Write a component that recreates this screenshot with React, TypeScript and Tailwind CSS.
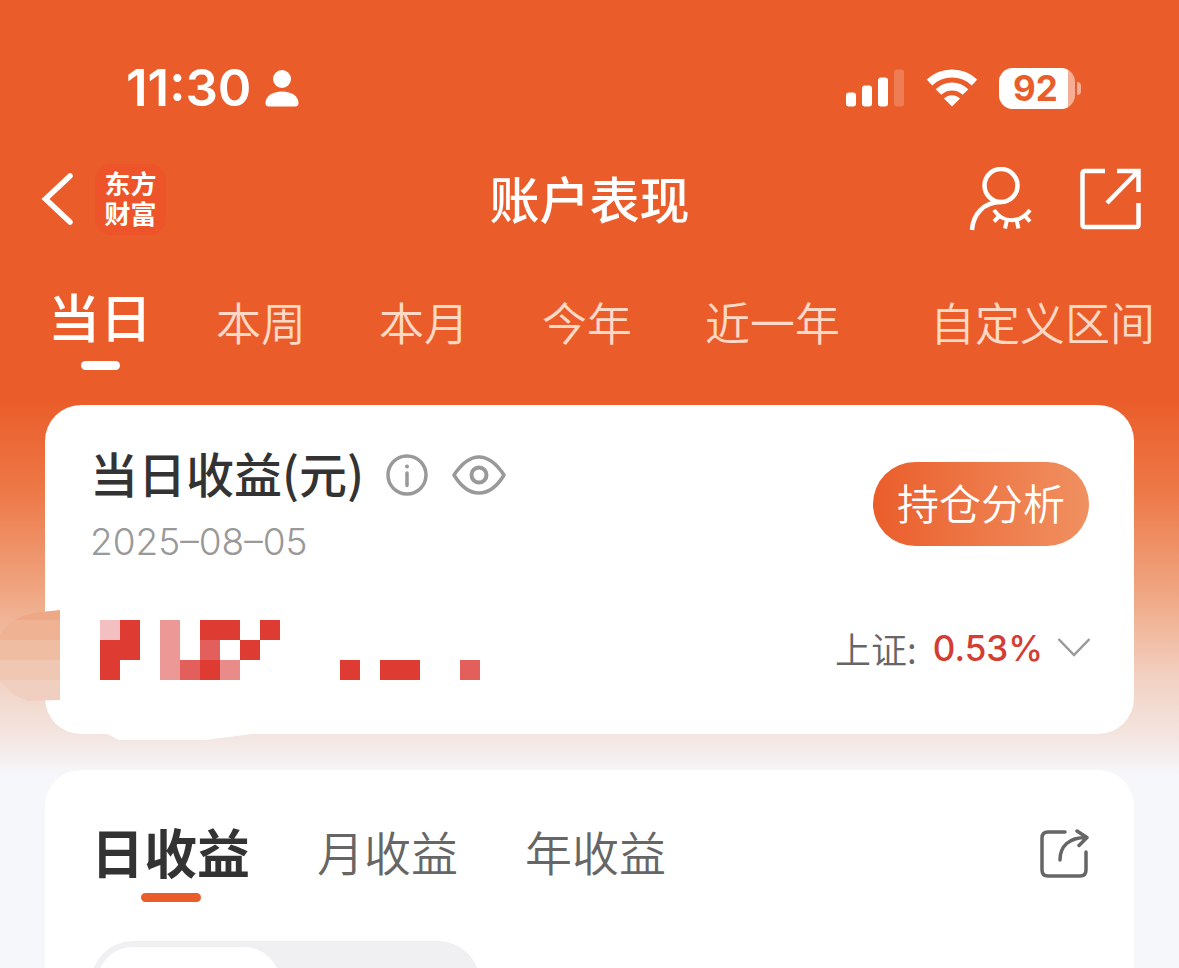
import { clsx } from "clsx"

const RANGES = ["本周", "本月", "今年", "近一年"]

// censored amount, 20px cells: [column, row, width, height, colour]
const MOSAIC: [number, number, number, number, string][] = [
  [0, 0, 1, 1, "#f3bfc1"],
  [1, 0, 1, 2, "#de3c33"],
  [0, 1, 1, 2, "#de3c33"],
  [3, 0, 1, 3, "#eb9897"],
  [5, 0, 2, 1, "#de3c33"],
  [8, 0, 1, 1, "#de3c33"],
  [5, 1, 1, 1, "#e35f5c"],
  [7, 1, 1, 1, "#de3c33"],
  [4, 2, 1, 1, "#e35f5c"],
  [5, 2, 1, 1, "#de3c33"],
  [6, 2, 1, 1, "#e98b89"],
  [12, 2, 1, 1, "#de3c33"],
  [14, 2, 2, 1, "#de3c33"],
  [18, 2, 1, 1, "#e35f5c"],
]

function StatusBar() {
  return (
    <div className="flex h-12 shrink-0 items-center justify-between pr-[98px] pl-[126px] text-white">
      <div className="flex items-center gap-[14px]">
        <span className="font-['Inter',sans-serif] text-[51px] leading-[48px] font-semibold">11:30</span>
        <svg width="34" height="38" viewBox="0 0 34 38" fill="currentColor" aria-hidden="true">
          <circle cx="17" cy="10" r="9" />
          <path d="M4 37.500Q0.500 37.500 0.500 34C0.500 27.500 7 22.500 17 22.500S33.500 27.500 33.500 34Q33.500 37.500 30 37.500Z" />
        </svg>
      </div>
      <div className="flex items-center">
        <svg width="58" height="38" viewBox="0 0 58 38" fill="currentColor" aria-hidden="true">
          <rect x="0" y="23.500" width="10" height="14" rx="3" />
          <rect x="16" y="16.500" width="10" height="21" rx="3" />
          <rect x="32" y="8.500" width="10" height="29" rx="3" />
          <rect x="48" y="0.500" width="10" height="37" rx="3" opacity="0.2" />
        </svg>
        <svg className="ml-[22px]" width="52" height="38" viewBox="0 0 52 38" aria-hidden="true">
          <g fill="none" stroke="currentColor" strokeWidth="8">
            <path d="M3.500 13.500C16 1.500 36 1.500 48.500 13.500" />
            <path d="M12.500 23C20 15.500 32 15.500 39.500 23" />
          </g>
          <path d="M26 37.500L18 29.500C22.500 25 29.500 25 34 29.500Z" fill="currentColor" />
        </svg>
        <div className="ml-[21px] flex h-[41px] w-[76px] items-center overflow-hidden rounded-[14px] bg-white/50">
          <span className="h-full w-[69px] bg-white pl-1 text-center font-['Inter',sans-serif] text-[35px] leading-[41px] font-bold text-[#ea5d2a]">
            92
          </span>
        </div>
        <span className="ml-[2px] h-[13px] w-1 rounded-r-full bg-white/50" />
      </div>
    </div>
  )
}

function TitleBar() {
  return (
    <header className="mt-[51px] grid h-[72px] shrink-0 grid-cols-[1fr_auto_1fr] items-center px-[38px] text-white">
      <div className="flex items-center gap-[18px]">
        <button aria-label="返回">
          <svg width="39" height="56" viewBox="0 0 39 56" fill="none" stroke="currentColor" strokeWidth="5.500" strokeLinecap="round">
            <path d="M32 5L7.500 28L32 51" />
          </svg>
        </button>
        <div className="flex h-[71px] w-[71px] flex-col items-center justify-center rounded-[16px] bg-[#ed5429] pb-[2px] text-[26px] leading-[30px] font-bold">
          <span>东方</span>
          <span>财富</span>
        </div>
      </div>
      <h1 className="pb-1 text-[50px] leading-[68px] font-medium">账户表现</h1>
      <div className="flex items-center justify-end gap-12">
        <button aria-label="隐藏账户">
          <svg width="64" height="64" viewBox="0 0 64 64" fill="none" stroke="currentColor" strokeWidth="4.500">
            <circle cx="33" cy="18.500" r="16.500" />
            <path d="M33 35C15 35 5 48 4 63" />
            <path d="M26 43C35 56.500 52 56.500 62 43M31.500 49L26 54.500M57 49L62 54.500M39 53L37 61.500M48.500 53L50.500 61.500" strokeWidth="4" />
          </svg>
        </button>
        <button aria-label="导出">
          <svg width="61" height="62" viewBox="0 0 61 62" fill="none" stroke="currentColor" strokeWidth="4.500">
            <path d="M25 3H5Q2.500 3 2.500 5.500V56.500Q2.500 59 5 59H56Q58.500 59 58.500 56.500V35" />
            <path d="M37 3H58.500V24M58 3.500L27 35" />
          </svg>
        </button>
      </div>
    </header>
  )
}

function RangeTabs() {
  return (
    <nav className="mt-[45px] flex h-[90px] shrink-0 items-start pr-6 pl-12 whitespace-nowrap">
      <button className="mr-16 flex flex-col items-center text-[52px] leading-[72px] font-medium text-white">
        当日
        <span className="mt-[9px] h-[9px] w-[39px] rounded-full bg-white" />
      </button>
      <div className="flex gap-[73px]">
        {RANGES.map((range) => (
          <button key={range} className="text-[45px] leading-[84px] font-[350] text-[#ffd9c5]">
            {range}
          </button>
        ))}
      </div>
      <button className="ml-auto text-[45px] leading-[84px] font-[350] text-[#ffd9c5]">自定义区间</button>
    </nav>
  )
}

function ProfitCard() {
  return (
    <section className="relative mx-[45px] mt-[35px] h-[329px] shrink-0 rounded-[36px] bg-white px-[45px]">
      {/* eraser strokes that run past the card edge */}
      <svg className="absolute top-[205px] -left-[45px]" width="60" height="92" viewBox="0 0 60 92" aria-hidden="true">
        <path d="M15 10C25 3 40 2 60 0V10Z" fill="#eea886" />
        <path d="M15 10H60V30H0V25Q5 15 15 10Z" fill="#efb293" />
        <path d="M0 30H60V50H0Z" fill="#efbda2" />
        <path d="M0 50H60V70H0Z" fill="#f0c7b2" />
        <path d="M0 70H60V90L28 91Q12 87 0 70Z" fill="#f1cfc0" />
      </svg>
      <svg className="absolute top-[328px] left-[60px]" width="155" height="8" viewBox="0 0 155 8" aria-hidden="true">
        <path d="M0 0L14 7H100L155 0Z" fill="#fff" />
      </svg>

      <div className="flex items-start justify-between pt-[40px]">
        <div>
          <div className="flex items-center">
            <h2 className="pb-[6px] text-[48px] leading-[54px] font-medium text-[#333]">当日收益(元)</h2>
            <button className="ml-[22px]" aria-label="说明">
              <svg width="42" height="42" viewBox="0 0 42 42" fill="none" stroke="#999" strokeWidth="3.500">
                <circle cx="21" cy="21" r="19" />
                <path d="M21 19V31.500" strokeLinecap="round" />
                <circle cx="21" cy="12.500" r="2" fill="#999" stroke="none" />
              </svg>
            </button>
            <button className="ml-6" aria-label="显示金额">
              <svg width="54" height="42" viewBox="0 0 54 42" fill="none" stroke="#999" strokeWidth="3.500" strokeLinejoin="round">
                <path d="M2 21C8 12 16 3 27 3S46 12 52 21C46 31 38 39 27 39S8 31 2 21Z" />
                <circle cx="27" cy="21" r="7.500" strokeWidth="4" />
              </svg>
            </button>
          </div>
          <p className="mt-[13px] font-['Inter',sans-serif] text-[37px] leading-[48px] font-light text-[#999]">2025–08–05</p>
        </div>
        <button className="mt-[17px] h-[84px] w-[216px] rounded-full bg-linear-to-r from-[#ea5d2a] to-[#f09060] pb-[6px] text-[42px] font-[350] text-white">
          持仓分析
        </button>
      </div>

      <div className="-mr-[2px] mt-[46px] flex items-center justify-between">
        <svg className="ml-[10px]" width="380" height="80" viewBox="0 0 380 80" shapeRendering="crispEdges" role="img" aria-label="金额已隐藏">
          {MOSAIC.map(([x, y, w, h, fill]) => (
            <rect key={`${x}-${y}`} x={x * 20} y={8 + y * 20} width={w * 20} height={h * 20} fill={fill} />
          ))}
        </svg>
        <button className="flex items-center pb-2 text-[36px] leading-[48px]">
          <span className="font-[350] text-[#666]">上证:</span>
          <span className="ml-4 font-['Inter',sans-serif] text-[35px] font-medium text-[#d43d33]">0.53%</span>
          <svg className="ml-[14px]" width="34" height="22" viewBox="0 0 34 22" fill="none" stroke="#999" strokeWidth="2.500">
            <path d="M1.500 2L17 18L32.500 2" />
          </svg>
        </button>
      </div>
    </section>
  )
}

function ProfitTab({ label, active }: { label: string; active?: boolean }) {
  return (
    <button
      className={clsx(
        "flex flex-col items-center leading-[68px]",
        active ? "text-[53px] font-bold text-[#333]" : "text-[47px] font-[350] text-[#666]",
      )}
    >
      {label}
      {active && <span className="mt-2 h-[9px] w-[60px] rounded-full bg-[#ea5d2a]" />}
    </button>
  )
}

function HistoryCard() {
  return (
    <section className="mx-[45px] mt-9 flex-1 rounded-t-[36px] bg-white pr-[45px] pl-[46px]">
      <div className="flex h-[132px] items-start justify-between pt-[47px]">
        <div className="flex items-start gap-[67px]">
          <ProfitTab label="日收益" active />
          <ProfitTab label="月收益" />
          <ProfitTab label="年收益" />
        </div>
        <button className="mt-3" aria-label="分享">
          <svg width="49" height="50" viewBox="0 0 49 50" fill="none" stroke="#666" strokeWidth="3.500" strokeLinecap="round" strokeLinejoin="round">
            <path d="M25 3H8Q2 3 2 9V41Q2 47 8 47H40Q46 47 46 41V23" />
            <path d="M20 31C20 17 29 8.500 46 8.500M37 2L47 8.500L39 16.500" />
          </svg>
        </button>
      </div>
      <div className="mt-[39px] flex items-start">
        <div className="h-[84px] w-[389px] rounded-full bg-[#f0f0f3] p-[6px]">
          <div className="h-[72px] w-[183px] rounded-full bg-white" />
        </div>
      </div>
    </section>
  )
}

export default function App() {
  return (
    <main className="flex h-screen flex-col overflow-hidden bg-[linear-gradient(to_bottom,#ea5d2a_400px,#ed7847_490px,#efa580_590px,#f2d2c4_680px,#f3e5e0_735px,#f6f7fb_775px)] pt-16 font-['Noto_Sans_CJK_SC',sans-serif]">
      <StatusBar />
      <TitleBar />
      <RangeTabs />
      <ProfitCard />
      <HistoryCard />
    </main>
  )
}
